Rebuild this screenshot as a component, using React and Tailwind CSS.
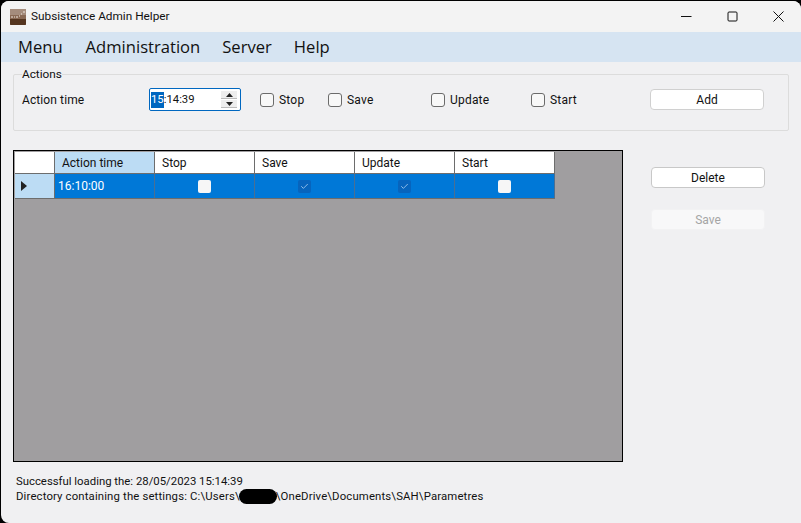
import { Check } from "lucide-react"

const columns = [
  { name: "Stop", checked: false },
  { name: "Save", checked: true },
  { name: "Update", checked: true },
  { name: "Start", checked: false }
]

function CheckItem({ label, className }) {
  return (
    <label className={`flex items-center gap-[5px] ${className}`}>
      <span className="w-[14px] h-[14px] rounded-[3px] border border-[#6b6b6b] bg-[#f8f8f8]" />
      <span className="tracking-[0.2px]">{label}</span>
    </label>
  )
}

function GridCheck({ checked }) {
  if (checked) {
    return (
      <span className="w-[13px] h-[13px] rounded-[2px] bg-[#0764bd] flex items-center justify-center">
        <Check size={9} strokeWidth={2} className="text-[#b9d8f5]" />
      </span>
    )
  }
  return <span className="w-[13px] h-[13px] rounded-[2px] bg-[#f6f6f6]" />
}

function Spinner() {
  return (
    <div className="w-[92px] h-[23px] flex items-center border border-[#0067c0] rounded-[2px] bg-white pl-[1px] pr-[3px] text-[11.3px]">
      <span className="bg-[#0067c0] text-white leading-[16px]">15</span>
      <span className="flex-1 leading-[16px]">:14:39</span>
      <div className="w-[16px] flex flex-col gap-[1px]">
        <span className="h-[8px] bg-[#eeeeee] border-b border-[#bbbbbb] flex items-center justify-center">
          <svg width="7" height="4" viewBox="0 0 7 4"><path d="M3.5 0L7 4H0z" fill="#222" /></svg>
        </span>
        <span className="h-[8px] bg-[#eeeeee] border-b border-[#bbbbbb] flex items-center justify-center">
          <svg width="7" height="4" viewBox="0 0 7 4"><path d="M0 0h7L3.5 4z" fill="#222" /></svg>
        </span>
      </div>
    </div>
  )
}

function AppIcon() {
  return (
    <svg width="16" height="16" viewBox="0 0 16 16" className="rounded-[1px]">
      <rect width="16" height="16" fill="#8a6a55" />
      <rect width="16" height="6" fill="#a58c7c" />
      <rect y="10" width="16" height="6" fill="#55351f" />
      <path d="M1 8h2M4 8h1M6 8h2M9 7h1M11 5h1M13 3h2" stroke="#efe6dd" strokeWidth="1.2" />
    </svg>
  )
}

function WindowButtons() {
  return (
    <div className="flex items-center gap-[35px] mr-[17px]">
      <svg width="11" height="11" viewBox="0 0 11 11"><path d="M0 5.5h10.5" stroke="#111" /></svg>
      <svg width="11" height="11" viewBox="0 0 11 11"><rect x="1" y="1" width="9" height="9" rx="1" fill="none" stroke="#111" /></svg>
      <svg width="11" height="11" viewBox="0 0 11 11"><path d="M.5.5l10 10M10.5.5l-10 10" stroke="#111" /></svg>
    </div>
  )
}

export default function App() {
  return (
    <div
      className="w-[801px] h-[523px] bg-black pt-[1px] pl-[1px] overflow-hidden text-[12px] text-[#111]"
      style={{ fontFamily: 'Roboto, "Open Sans", sans-serif' }}
    >
      <div className="h-[522px] bg-[#f0f0f2] rounded-t-[8px] rounded-bl-[8px] overflow-hidden">
        <div className="h-[31px] bg-[#f3f3f3] flex items-center justify-between pl-[9px]">
          <div className="flex items-center gap-[5px]">
            <AppIcon />
            <span className="text-[11.8px]">Subsistence Admin Helper</span>
          </div>
          <WindowButtons />
        </div>

        <div className="h-[30px] bg-[#d6e4f2] flex items-center pl-[17px] gap-[22px] text-[16.6px] font-['Open_Sans']">
          <span>Menu</span>
          <span className="ml-[1px]">Administration</span>
          <span>Server</span>
          <span>Help</span>
        </div>

        <fieldset className="mx-[12px] mt-[4px] h-[65px] border border-[#dcdcdc] rounded-[2px] pl-[8px]">
          <legend className="leading-[16px] text-[11.8px]">Actions</legend>
          <div className="flex items-center mt-[6px]">
            <span className="w-[127px] tracking-[0.1px]">Action time</span>
            <Spinner />
            <CheckItem label="Stop" className="w-[68px] ml-[19px]" />
            <CheckItem label="Save" className="w-[103px]" />
            <CheckItem label="Update" className="w-[100px]" />
            <CheckItem label="Start" className="w-[119px]" />
            <button className="w-[114px] h-[21px] bg-white border border-[#d0d0d0] rounded-[4px]">Add</button>
          </div>
        </fieldset>

        <div className="flex mt-[19px] ml-[12px]">
          <div className="w-[610px] h-[312px] border border-black bg-[#a09ea0] p-[1px]">
            <div className="w-[540px]">
              <div className="flex h-[22px] bg-white border-b border-[#6d6d6d]">
                <div className="w-[40px] border-r border-[#6d6d6d]" />
                <div className="w-[100px] bg-[#bcdcf4] border-r border-[#6d6d6d] pl-[7px] leading-[22px]">Action time</div>
                {columns.map((c) => (
                  <div key={c.name} className="w-[100px] border-r border-[#6d6d6d] pl-[7px] leading-[22px]">{c.name}</div>
                ))}
              </div>
              <div className="flex h-[25px] bg-[#0078d7] border-b border-[#6d6d6d]">
                <div className="w-[40px] bg-[#bcdcf4] border-r border-[#6d6d6d] flex items-center pl-[6px]">
                  <svg width="6" height="10" viewBox="0 0 6 10"><path d="M0 0l6 5-6 5z" fill="#222" /></svg>
                </div>
                <div className="w-[100px] border-r border-[#4a6f93] pl-[3px] leading-[25px] text-white">16:10:00</div>
                {columns.map((c) => (
                  <div key={c.name} className="w-[100px] border-r border-[#4a6f93] flex items-center justify-center">
                    <GridCheck checked={c.checked} />
                  </div>
                ))}
              </div>
            </div>
          </div>

          <div className="ml-[28px] mt-[17px] flex flex-col gap-[21px]">
            <button className="w-[114px] h-[21px] bg-white border border-[#c8c8c8] rounded-[4px]">Delete</button>
            <button className="w-[114px] h-[21px] bg-[#f8f8f9] border border-[#f2f2f3] rounded-[4px] text-[#a5a5a5]">Save</button>
          </div>
        </div>

        <div className="mt-[12px] ml-[15px] leading-[15px] text-[11.35px]">
          <div>Successful loading the: 28/05/2023 15:14:39</div>
          <div className="flex items-center tracking-[0.15px]">
            <span>Directory containing the settings: C:\Users\</span>
            <span className="w-[38px] h-[15px] -mx-[1px] rounded-full bg-black" />
            <span>\OneDrive\Documents\SAH\Parametres</span>
          </div>
        </div>
      </div>
    </div>
  )
}
